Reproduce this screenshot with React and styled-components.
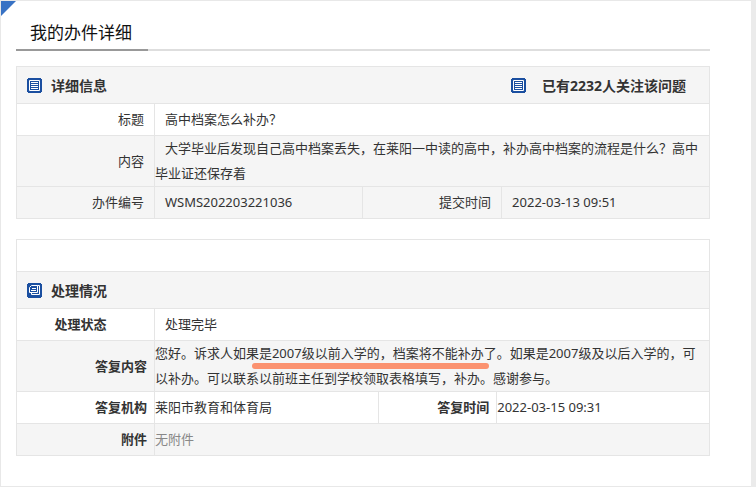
import React from "react";
import styled, { createGlobalStyle, css } from "styled-components";

const info = {
  title: "高中档案怎么补办？",
  content:
    "大学毕业后发现自己高中档案丢失，在莱阳一中读的高中，补办高中档案的流程是什么？高中毕业证还保存着",
  number: "WSMS202203221036",
  submitted: "2022-03-13 09:51",
  followers: 2232,
};

const reply = {
  status: "处理完毕",
  org: "莱阳市教育和体育局",
  time: "2022-03-15 09:31",
  attachment: "无附件",
};

function ListIcon() {
  return (
    <SIcon viewBox="0 0 15 15" aria-hidden="true">
      <path
        fill="#1b4fa0"
        d="M1 0h13v1h1v13h-1v1H1v-1H0V1h1z"
      />
      <path fill="none" stroke="#fff" d="M2.5 2.5h10v10h-10z" />
      <path stroke="#fff" d="M4 4.5h7M4 6.5h7M4 8.5h7M4 10.5h7" />
    </SIcon>
  );
}

function CopyIcon() {
  return (
    <SIcon viewBox="0 0 15 15" aria-hidden="true">
      <path
        fill="#1b4fa0"
        d="M1 0h13v1h1v13h-1v1H1v-1H0V1h1z"
      />
      <path
        fill="none"
        stroke="#fff"
        d="M4.5 2.5h6v7h-8v-5zM10.5 2.5h2v9h-8v-2"
      />
      <path stroke="#fff" d="M5 5.5h4M4 7.5h5" />
    </SIcon>
  );
}

function Detail() {
  return (
    <STable>
      <colgroup>
        <SCol $width="19.9%" />
        <SCol $width="30.1%" />
        <SCol $width="20%" />
        <SCol $width="30%" />
      </colgroup>
      <tbody>
        <SRow $gray $tall>
          <SHead colSpan={4}>
            <SHeadInner>
              <SHeadItem>
                <ListIcon />
                详细信息
              </SHeadItem>
              <SHeadItem $wide>
                <ListIcon />
                <span>已有{info.followers}人关注该问题</span>
              </SHeadItem>
            </SHeadInner>
          </SHead>
        </SRow>
        <SRow>
          <SLabel scope="row">标题</SLabel>
          <SValue $pad colSpan={3}>
            {info.title}
          </SValue>
        </SRow>
        <SRow $gray>
          <SLabel scope="row">内容</SLabel>
          <SValue $indent colSpan={3}>
            {info.content}
          </SValue>
        </SRow>
        <SRow $gray>
          <SLabel scope="row">办件编号</SLabel>
          <SValue $pad>{info.number}</SValue>
          <SLabel scope="row">提交时间</SLabel>
          <SValue $pad>{info.submitted}</SValue>
        </SRow>
      </tbody>
    </STable>
  );
}

function Reply() {
  return (
    <STable>
      <colgroup>
        <SCol $width="19.9%" />
        <SCol $width="32.4%" />
        <SCol $width="17%" />
        <SCol $width="30.7%" />
      </colgroup>
      <tbody>
        <SRow>
          <SValue colSpan={4} />
        </SRow>
        <SRow $gray $tall>
          <SHead colSpan={4}>
            <SHeadInner>
              <SHeadItem>
                <CopyIcon />
                处理情况
              </SHeadItem>
            </SHeadInner>
          </SHead>
        </SRow>
        <SRow>
          <SLabel scope="row" $bold $center>
            处理状态
          </SLabel>
          <SValue $pad colSpan={3}>
            {reply.status}
          </SValue>
        </SRow>
        <SRow $gray>
          <SLabel scope="row" $bold>
            答复内容
          </SLabel>
          <SValue colSpan={3}>
            您好。诉求人如果
            <SMarked>是2007级以前入学的，档案将不能补办</SMarked>
            了。如果是2007级及以后入学的，可以补办。可以联系以前班主任到学校领取表格填写，补办。感谢参与。
          </SValue>
        </SRow>
        <SRow>
          <SLabel scope="row" $bold>
            答复机构
          </SLabel>
          <SValue>{reply.org}</SValue>
          <SLabel scope="row" $bold>
            答复时间
          </SLabel>
          <SValue>{reply.time}</SValue>
        </SRow>
        <SRow $gray>
          <SLabel scope="row" $bold>
            附件
          </SLabel>
          <SValue $muted colSpan={3}>
            {reply.attachment}
          </SValue>
        </SRow>
      </tbody>
    </STable>
  );
}

function App() {
  return (
    <>
      <GlobalStyle />
      <SCard>
        <STitleBar>
          <STitle>我的办件详细</STitle>
        </STitleBar>
        <Detail />
        <Reply />
      </SCard>
    </>
  );
}

export default App;

const GlobalStyle = createGlobalStyle`
  * {
    box-sizing: border-box;
  }
  body {
    margin: 0;
    background: #ebebeb;
    color: #333;
    font-family: "Noto Sans", "Noto Sans CJK SC", sans-serif;
    font-size: 13px;
    line-height: 25px;
  }
`;

const SCard = styled.main`
  position: relative;
  display: flex;
  flex-direction: column;
  gap: 20px;
  margin-right: 5px;
  padding: 15px 41px 30px 15px;
  border: solid #e8e8e8;
  border-width: 1px 0 1px 1px;
  background: #fff;

  &::before {
    content: "";
    position: absolute;
    top: 0;
    left: 0;
    border-top: 15px solid #3872c4;
    border-right: 15px solid transparent;
  }
`;

const STitleBar = styled.header`
  display: flex;
  margin-bottom: -5px;
  box-shadow: inset 0 -2px #dedede;
`;

const STitle = styled.h1`
  margin: 0;
  padding: 0 16px 0 14px;
  border-bottom: 2px solid #999;
  color: #111;
  font-size: 17px;
  font-weight: 400;
  line-height: 33px;
`;

const STable = styled.table`
  width: 100%;
  table-layout: fixed;
  border-collapse: collapse;
`;

const SCol = styled.col`
  width: ${({ $width }) => $width};
`;

const SRow = styled.tr`
  height: ${({ $tall }) => ($tall ? 37 : 32)}px;
  background: ${({ $gray }) => ($gray ? "#f5f5f5" : "#fff")};
`;

const cell = css`
  border: 1px solid #e5e5e5;
  vertical-align: middle;
`;

const SHead = styled.th`
  ${cell}
  padding: 1px 20px 0 10px;
  font-size: 14px;
  text-align: left;
`;

const SHeadInner = styled.div`
  display: flex;
  justify-content: space-between;
`;

const SHeadItem = styled.div`
  display: flex;
  align-items: center;
  gap: ${({ $wide }) => ($wide ? 16 : 9)}px;
  min-width: ${({ $wide }) => ($wide ? 178 : 0)}px;
`;

const SIcon = styled.svg`
  flex: none;
  width: 15px;
  height: 15px;
`;

const SLabel = styled.th`
  ${cell}
  padding: 0 ${({ $bold, $center }) => ($bold && !$center ? 7 : 10)}px 0 0;
  font-weight: ${({ $bold }) => ($bold ? 700 : 400)};
  text-align: ${({ $center }) => ($center ? "center" : "right")};
`;

const SValue = styled.td`
  ${cell}
  padding: 0 4px 0 ${({ $pad }) => ($pad ? 10 : 0)}px;
  color: ${({ $muted }) => ($muted ? "#888" : "inherit")};
  text-indent: ${({ $indent }) => ($indent ? 10 : 0)}px;
`;

const SMarked = styled.span`
  position: relative;

  &::after {
    content: "";
    position: absolute;
    right: -5px;
    bottom: -7px;
    left: -7px;
    height: 6px;
    border-radius: 3px;
    background: #fb9270;
  }
`;
